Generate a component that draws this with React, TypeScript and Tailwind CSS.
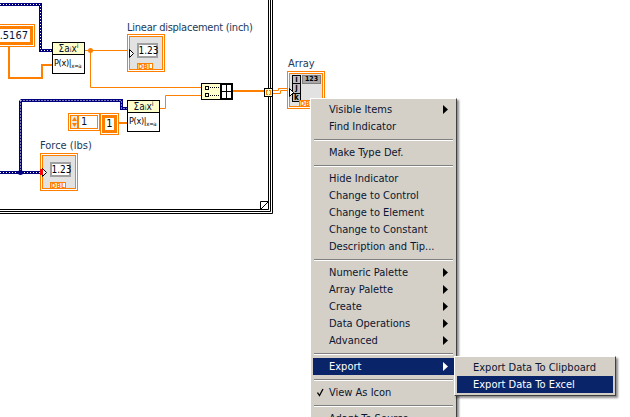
const font = "[font-family:'DejaVu_Sans',sans-serif] font-stretch-condensed"

function Arrow({ white }: { white?: boolean }) {
  return (
    <svg width="5" height="9" viewBox="0 0 5 9" className="shrink-0">
      <path d="M0 0 L5 4.5 L0 9 Z" fill={white ? '#ffffff' : '#000000'} />
    </svg>
  )
}

function MenuItem({ label, arrow, active, check }: { label: string; arrow?: boolean; active?: boolean; check?: boolean }) {
  return (
    <div className={`h-[17px] flex items-center justify-between pl-[16px] pr-[6px] ${active ? 'bg-[#0a246a] text-white' : 'text-[#0b1530]'}`}>
      <div className="flex items-center relative pt-[2px]">
        {check && (
          <svg width="7" height="9" viewBox="0 0 7 9" className="absolute left-[-12px] top-[5px]">
            <path d="M0.5 4.5 L2.5 7.5 L6 1" stroke="#000" strokeWidth="1.3" fill="none" />
          </svg>
        )}
        <span>{label}</span>
      </div>
      {arrow && <Arrow white={active} />}
    </div>
  )
}

function Sep() {
  return <div className="h-[2px] my-[3.5px] mx-[1px] bg-[#808080] border-b border-white" />
}

function Formula({ className }: { className: string }) {
  return (
    <div className={`absolute w-[33px] h-[32px] border border-black bg-white flex flex-col ${className}`}>
      <div className="h-[12px] bg-[#ffffcc] border-b border-black text-[10px] leading-[11px] text-center text-[#0b1530] whitespace-nowrap">Σa<span className="text-[7px]">i</span>x<span className="text-[7px] align-top leading-[6px]">i</span></div>
      <div className="flex-1 text-[9px] tracking-[-0.3px] flex items-center pl-[1px] text-black whitespace-nowrap">P(x)|<span className="text-[6px] mt-[3px]">x=a</span></div>
    </div>
  )
}

function Indicator({ className, red }: { className: string; red?: boolean }) {
  return (
    <div className={`absolute w-[38px] h-[38px] border border-[#ff8000] bg-white p-[1px] ${className}`}>
      <div className="relative w-full h-full border border-[#ff8000] bg-[#e2e2e2] flex justify-center pt-[6px] pl-[2px]">
        <div className="w-[21px] h-[15px] border-2 border-[#a0a0a0] bg-white text-[10px] leading-[11px] text-center text-black">1.23</div>
        <div className="absolute bottom-[-1px] left-[7px] w-[16px] h-[7px] border border-[#ff8000] bg-white text-[7px] leading-[6px] font-bold text-center text-[#ff8000]">DBL</div>
        <svg width="5" height="9" viewBox="0 0 5 9" className="absolute left-[-1px] top-[12px]">
          <path d="M0.5 0.5 L4.5 4.5 L0.5 8.5 Z" fill="#fff" stroke="#000" />
        </svg>
        {red && <div className="absolute left-[-3px] top-[13px] w-[3px] h-[6px] bg-[#ff0000]" />}
      </div>
    </div>
  )
}

function Diagram() {
  return (
    <div className="absolute inset-0">
      <svg width="630" height="417" className="absolute left-0 top-0">
        {/* frame */}
        <path d="M268.5 0 V209.5 H0 M270.5 0 V211.5 H0 M272.5 0 V213.5 H0" stroke="#000" fill="none" />
        <path d="M260.5 209.5 V201.5 H268.5 Z" fill="#fff" stroke="#000" />
        <path d="M261 209 L268 202" stroke="#000" strokeDasharray="1 1" />
        {/* dbl array wires */}
        <path d="M0 4.5 H40.5 V50.5 H53 M20.5 100.5 H121.5 V108.5 H128 M20.5 100.5 V172.5 M0 172.5 H41" stroke="#00007f" strokeWidth="3" fill="none" />
        <path d="M0 4.5 H40.5 V50.5 H53 M20.5 100.5 H121.5 V108.5 H128 M20.5 100.5 V172.5 M0 172.5 H41" stroke="#ffffff" strokeWidth="1" strokeDasharray="1 2" fill="none" />
        <circle cx="20.5" cy="172.5" r="2.5" fill="#00007f" />
        <rect x="52" y="48" width="2" height="5" fill="#ff0000" />
        <rect x="127" y="106" width="2" height="5" fill="#ff0000" />
        {/* orange wires */}
        <path d="M9 46 V78 H42 V65 H52" stroke="#ff8000" strokeWidth="2" fill="none" />
        <path d="M84 50.5 H128 M90.5 50 V87.5 H201 M159 108.5 H165.5 V95.5 H201" stroke="#ff8000" fill="none" />
        <circle cx="90.5" cy="50.5" r="2.5" fill="#ff8000" />
        <path d="M118 123 H127" stroke="#ff8000" strokeWidth="2" />
        <path d="M233 91 H264" stroke="#ff8000" strokeWidth="2" />
        <path d="M273 93.5 H280.5 V90.5 H289 M273 90.5 H278.5 V88.5 H289" stroke="#ff8000" fill="none" />
      </svg>

      <span className="absolute left-[127px] top-[20px] text-[11px] tracking-[-0.25px] leading-[16px] text-[#1a3a5c] whitespace-nowrap">Linear displacement (inch)</span>
      <span className="absolute left-[40px] top-[138px] text-[11px] leading-[16px] text-[#1a3a5c] whitespace-nowrap">Force (lbs)</span>
      <span className="absolute left-[288px] top-[56px] text-[11px] leading-[16px] text-[#1a3a5c] whitespace-nowrap">Array</span>

      {/* .5167 constant */}
      <div className="absolute left-[-12px] top-[24px] w-[47px] h-[23px] border border-[#ff8000] bg-white p-[1px]">
        <div className="w-full h-full border-[3px] border-[#ff8000] text-[11px] leading-[13px] text-right pr-[2px] text-[#0b1530]">.5167</div>
      </div>

      <Formula className="left-[52px] top-[42px]" />
      <Formula className="left-[127px] top-[100px]" />
      <Indicator className="left-[127px] top-[34px]" />
      <Indicator className="left-[40px] top-[153px]" red />

      {/* numeric control */}
      <div className="absolute left-[68px] top-[113px] w-[32px] h-[18px] border border-[#ff8000] bg-white p-[1px] flex">
        <div className="w-[8px] border border-[#ff8000] bg-[#e8e8e8] flex flex-col items-center justify-around">
          <svg width="5" height="4" viewBox="0 0 5 4"><path d="M2.5 0 L5 4 H0 Z" fill="#ff8000" /></svg>
          <svg width="5" height="4" viewBox="0 0 5 4"><path d="M2.5 4 L5 0 H0 Z" fill="#ff8000" /></svg>
        </div>
        <div className="flex-1 border border-[#ff8000] text-[11px] leading-[12px] pl-[2px] text-[#0b1530]">1</div>
      </div>
      {/* constant */}
      <div className="absolute left-[100px] top-[113px] w-[19px] h-[22px] border border-[#ff8000] bg-white p-[1px]">
        <div className="w-full h-full border-[3px] border-[#ff8000] text-[11px] leading-[12px] text-center text-black">1</div>
      </div>

      {/* build array */}
      <div className="absolute left-[201px] top-[83px] w-[32px] h-[17px] border border-black bg-[#ffffcc] flex">
        <div className="flex-1 flex flex-col justify-around pl-[3px]">
          <div className="flex items-center gap-[1px]">
            <div className="w-[4px] h-[4px] border border-black" />
            <div className="w-[9px] border-t border-dotted border-black" />
          </div>
          <div className="flex items-center gap-[1px]">
            <div className="w-[4px] h-[4px] border border-black" />
            <div className="w-[9px] border-t border-dotted border-black" />
          </div>
        </div>
        <div className="w-[12px] border-l border-black grid grid-cols-2 grid-rows-2 p-[1px] gap-[1px] bg-black">
          <div className="bg-white" />
          <div className="bg-white" />
          <div className="bg-white" />
          <div className="bg-white" />
        </div>
      </div>

      {/* tunnel */}
      <div className="absolute left-[264px] top-[88px] w-[9px] h-[9px] border border-black bg-[#ffffcc] p-[1px] flex justify-between">
        <div className="w-[2px] h-[5px] border-l border-y border-[#ff8000]" />
        <div className="w-[2px] h-[5px] border-r border-y border-[#ff8000]" />
      </div>

      {/* array indicator */}
      <div className="absolute left-[287px] top-[71px] w-[38px] h-[38px] border border-[#ff8000] bg-white p-[1px]">
        <div className="relative w-full h-full border border-[#ff8000] bg-[#e2e2e2] pl-[2px] pt-[1px] flex gap-[1px]">
          <div className="w-[9px] flex flex-col">
            <div className="h-[9px] border border-black bg-[#c0c0c0] text-[8px] leading-[7px] text-center text-black font-bold">i</div>
            <div className="h-[9px] border-x border-black bg-[#c0c0c0] text-[8px] leading-[8px] text-center text-black font-bold">j</div>
            <div className="h-[9px] border border-black bg-[#c0c0c0] text-[8px] leading-[7px] text-center text-black font-bold">k</div>
          </div>
          <div className="w-[19px] h-[9px] bg-[#a8a8a8] border border-[#808080] text-[7px] leading-[7px] text-center text-black font-bold">123</div>
          <svg width="5" height="9" viewBox="0 0 5 9" className="absolute left-[-1px] top-[14px]">
            <path d="M0.5 0.5 L4.5 4.5 L0.5 8.5 Z" fill="#fff" stroke="#000" />
          </svg>
          <div className="absolute bottom-[-1px] left-[9px] w-[16px] h-[7px] border border-[#ff8000] bg-white text-[7px] leading-[6px] font-bold text-center text-[#ff8000]">DBL</div>
        </div>
      </div>
    </div>
  )
}

export default function App() {
  return (
    <div className={`relative w-[630px] h-[417px] bg-white overflow-hidden text-[11px] ${font}`}>
      <Diagram />

      {/* context menu */}
      <div className="absolute left-[310px] top-[98px] w-[147px] bg-[#d4d0c8] border border-t-white border-l-white border-r-[#404040] border-b-[#404040] p-[2px] shadow-[2px_2px_2px_rgba(0,0,0,0.45)]">
        <MenuItem label="Visible Items" arrow />
        <MenuItem label="Find Indicator" />
        <Sep />
        <MenuItem label="Make Type Def." />
        <Sep />
        <MenuItem label="Hide Indicator" />
        <MenuItem label="Change to Control" />
        <MenuItem label="Change to Element" />
        <MenuItem label="Change to Constant" />
        <MenuItem label="Description and Tip..." />
        <Sep />
        <MenuItem label="Numeric Palette" arrow />
        <MenuItem label="Array Palette" arrow />
        <MenuItem label="Create" arrow />
        <MenuItem label="Data Operations" arrow />
        <MenuItem label="Advanced" arrow />
        <Sep />
        <MenuItem label="Export" arrow active />
        <Sep />
        <MenuItem label="View As Icon" check />
        <Sep />
        <MenuItem label="Adapt To Source" />
      </div>

      {/* submenu */}
      <div className="absolute left-[454px] top-[356px] w-[162px] bg-[#d4d0c8] border border-t-white border-l-white border-r-[#404040] border-b-[#404040] p-[2px] shadow-[2px_2px_2px_rgba(0,0,0,0.45)]">
        <MenuItem label="Export Data To Clipboard" />
        <MenuItem label="Export Data To Excel" active />
      </div>
    </div>
  )
}
